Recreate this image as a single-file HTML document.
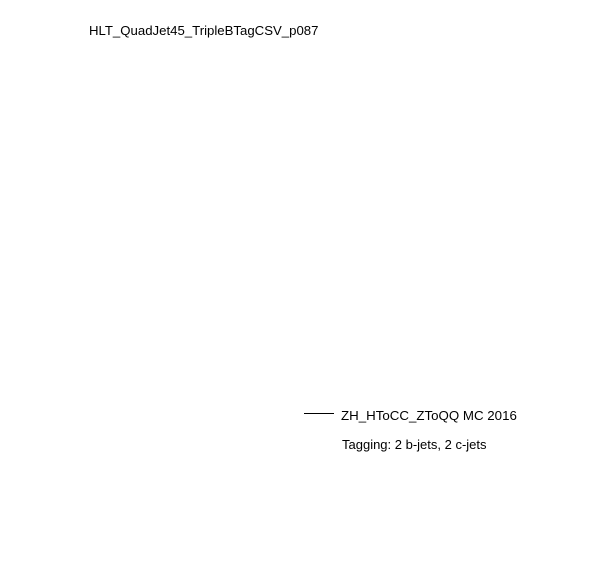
<!DOCTYPE html>
<html><head><style>
body{margin:0;width:596px;height:572px;background:#fff;position:relative;font-family:"Liberation Sans",sans-serif;color:#000;}
.t{position:absolute;font-size:13px;white-space:nowrap;}
</style></head><body>
<div class="t" style="left:89px;top:23px;font-size:13.2px;">HLT_QuadJet45_TripleBTagCSV_p087</div>
<div style="position:absolute;left:304px;top:413px;width:30px;height:1px;background:#000;"></div>
<div class="t" style="left:341px;top:408px;font-size:13.3px;">ZH_HToCC_ZToQQ MC 2016</div>
<div class="t" style="left:342px;top:437px;">Tagging: 2 b-jets, 2 c-jets</div>
</body></html>
